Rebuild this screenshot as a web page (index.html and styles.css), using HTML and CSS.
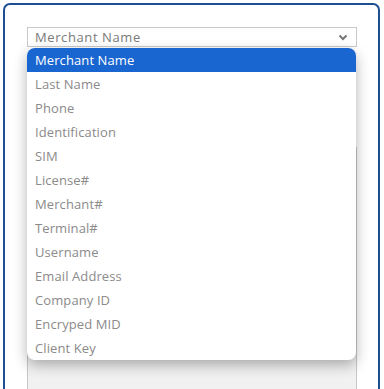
FILE: index.html
```html
<!DOCTYPE html>
<html lang="en">
<head>
    <meta charset="UTF-8">
    <meta name="viewport" content="width=device-width, initial-scale=1.0">
    <title>Search Filter</title>
    <link rel="stylesheet" href="styles.css">
</head>
<body>
    <div class="card">
        <div class="field">
            <div class="select">
                <span>Merchant Name</span>
                <svg class="chevron" width="10" height="7" viewBox="0 0 10 7">
                    <path d="M1.5 1.5 L5 5 L8.5 1.5" fill="none" stroke="#777" stroke-width="2"/>
                </svg>
            </div>
            <ul class="options">
                <li class="selected">Merchant Name</li>
                <li>Last Name</li>
                <li>Phone</li>
                <li>Identification</li>
                <li>SIM</li>
                <li>License#</li>
                <li>Merchant#</li>
                <li>Terminal#</li>
                <li>Username</li>
                <li>Email Address</li>
                <li>Company ID</li>
                <li>Encryped MID</li>
                <li>Client Key</li>
            </ul>
            <div class="results"></div>
        </div>
    </div>
</body>
</html>
```
FILE: styles.css
```css
html, body {
    height: 100%;
    overflow: hidden;
}
body {
    margin: 0;
    font-family: "Open Sans", sans-serif;
    background: #fff;
}
.card {
    margin: 3px 4px 0 3px;
    height: 420px;
    border: 2px solid #1b4f8f;
    border-radius: 7px;
    padding: 22px 21px 0 22px;
}
.field {
    position: relative;
}
.select {
    height: 18px;
    border: 1px solid #c9c9c9;
    display: flex;
    align-items: center;
    justify-content: space-between;
    padding: 0 8px 0 7px;
    font-size: 13px;
    letter-spacing: 0.6px;
    color: #7a7a7a;
}
.chevron {
    margin-top: 1px;
}
.results {
    margin-top: 100px;
    height: 300px;
    border: 1px solid #c8c8c8;
    background: #f1f1f1;
}
.options {
    position: absolute;
    top: 21px;
    left: 0;
    width: 329px;
    margin: 0;
    padding: 0;
    list-style: none;
    background: #fff;
    border-radius: 8px;
    box-shadow: 0 5px 14px rgba(0, 0, 0, 0.3);
    overflow: hidden;
    z-index: 2;
}
.options li {
    height: 24px;
    line-height: 24px;
    padding-left: 8px;
    font-size: 13px;
    letter-spacing: 0.1px;
    color: #8c8a8a;
}
.options li.selected {
    background: #1a66d1;
    color: #fff;
}
```
